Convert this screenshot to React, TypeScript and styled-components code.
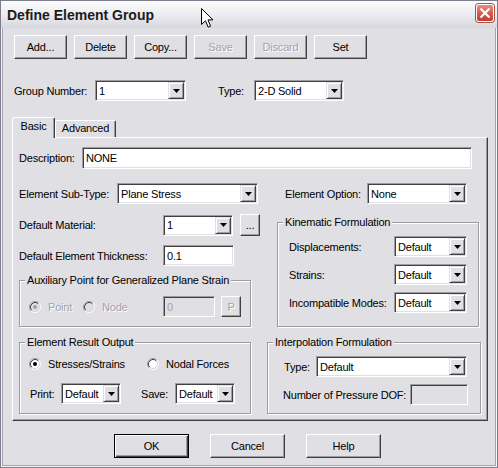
import React from 'react';
import styled, { createGlobalStyle } from 'styled-components';

// classic 3D palette, tuned to the screenshot
const FACE = '#e0dfe3';
const HILITE = '#ffffff';
const SHADE = '#9d9da1';
const DARK = '#404040';
const GREY_TEXT = '#a3a3a7';

const GlobalStyle = createGlobalStyle`
  html, body { margin: 0; padding: 0; background: ${FACE}; }
  body {
    font-family: 'Liberation Sans', Arial, sans-serif;
    font-size: 11px;
    letter-spacing: -0.2px;
    color: #000;
  }
  * { box-sizing: border-box; }
`;

const Window = styled.div`
  position: relative;
  width: 498px;
  height: 468px;
  background: ${FACE};
  border: 1px solid #7c7c8c;
  box-shadow: inset 0 0 0 1px #f6f6f8, inset 0 0 0 2px #a4a4b0;
  display: flex;
  flex-direction: column;
  overflow: hidden;
`;

const TitleBar = styled.div`
  height: 27px;
  flex: none;
  display: flex;
  align-items: center;
  justify-content: space-between;
  padding: 0 3px 0 6px;
  background: linear-gradient(to bottom, #fcfcfd 0%, #eeeef2 45%, #d7d7df 100%);
`;

const Title = styled.span`
  font-size: 14px;
  font-weight: bold;
  letter-spacing: 0;
  color: #1c1c1c;
`;

const CloseBox = styled.span`
  width: 18px;
  height: 18px;
  margin-top: -3px;
  border-radius: 3px;
  border: 1px solid #fff;
  box-shadow: 0 0 0 1px #b05048;
  background: linear-gradient(to bottom, #ea8c80 0%, #d55a4c 55%, #c03f33 100%);
  display: flex;
  align-items: center;
  justify-content: center;
`;

const Cursor = styled.svg`
  position: absolute;
  left: 200px;
  top: 7px;
`;

const Body = styled.div`
  flex: 1;
  display: flex;
  flex-direction: column;
  align-items: flex-start;
  padding: 7px 0 0 11px;
`;

const Toolbar = styled.div`
  display: flex;
  gap: 7px;
  margin-left: 2px;
`;

const Btn = styled.button<{ $w: number; $h?: number; $default?: boolean }>`
  width: ${p => p.$w}px;
  height: ${p => p.$h ?? 24}px;
  flex: none;
  padding: 0;
  font: inherit;
  letter-spacing: inherit;
  color: #000;
  background: ${FACE};
  border: 1px solid;
  border-color: ${p => (p.$default ? '#000' : `${HILITE} ${DARK} ${DARK} ${HILITE}`)};
  box-shadow: ${p =>
    p.$default
      ? `inset 1px 1px 0 ${HILITE}, inset -1px -1px 0 ${DARK}, inset -2px -2px 0 ${SHADE}`
      : `inset -1px -1px 0 ${SHADE}`};
  &:disabled {
    color: ${GREY_TEXT};
    text-shadow: 1px 1px 0 ${HILITE};
  }
`;

const Row = styled.div<{ $mt?: number; $ml?: number }>`
  display: flex;
  align-items: center;
  margin-top: ${p => p.$mt ?? 0}px;
  margin-left: ${p => p.$ml ?? 0}px;
`;

const Label = styled.span<{ $w?: number; $ml?: number; $disabled?: boolean }>`
  flex: none;
  width: ${p => (p.$w ? `${p.$w}px` : 'auto')};
  margin-left: ${p => p.$ml ?? 0}px;
  white-space: nowrap;
  color: ${p => (p.$disabled ? GREY_TEXT : '#000')};
  text-shadow: ${p => (p.$disabled ? `1px 1px 0 ${HILITE}` : 'none')};
`;

const Sunken = styled.div<{ $w: number; $h?: number; $disabled?: boolean }>`
  width: ${p => p.$w}px;
  height: ${p => p.$h ?? 21}px;
  flex: none;
  display: flex;
  align-items: stretch;
  padding: 1px;
  background: ${p => (p.$disabled ? FACE : '#fff')};
  border: 1px solid;
  border-color: ${SHADE} ${HILITE} ${HILITE} ${SHADE};
  box-shadow: inset 1px 1px 0 ${DARK}, inset -1px -1px 0 ${FACE};
`;

const FieldText = styled.span<{ $disabled?: boolean }>`
  flex: 1;
  padding-left: 2px;
  display: flex;
  align-items: center;
  white-space: nowrap;
  overflow: hidden;
  color: ${p => (p.$disabled ? GREY_TEXT : '#000')};
`;

const DropBtn = styled.span`
  width: 16px;
  flex: none;
  background: ${FACE};
  border: 1px solid;
  border-color: ${FACE} ${DARK} ${DARK} ${FACE};
  box-shadow: inset 1px 1px 0 ${HILITE}, inset -1px -1px 0 ${SHADE};
  display: flex;
  align-items: center;
  justify-content: center;
`;

const TabStrip = styled.div`
  display: flex;
  align-items: flex-end;
  height: 20px;
  margin-top: 16px;
`;

const Tab = styled.div<{ $w: number; $active?: boolean }>`
  width: ${p => p.$w}px;
  height: ${p => (p.$active ? 21 : 17)}px;
  margin-bottom: ${p => (p.$active ? -1 : 0)}px;
  position: relative;
  z-index: ${p => (p.$active ? 1 : 0)};
  background: ${FACE};
  border: 1px solid;
  border-bottom: none;
  border-color: ${HILITE} ${DARK} transparent ${HILITE};
  box-shadow: inset -1px 0 0 ${SHADE};
  border-radius: 2px 2px 0 0;
  text-align: center;
  line-height: ${p => (p.$active ? 16 : 15)}px;
`;

const Panel = styled.div`
  width: 476px;
  height: 284px;
  border: 1px solid;
  border-color: ${HILITE} ${DARK} ${DARK} ${HILITE};
  box-shadow: inset -1px -1px 0 ${SHADE};
  padding: 9px 6px 0 6px;
`;

const Columns = styled.div`
  display: grid;
  grid-template-columns: 232px 214px;
  column-gap: 16px;
  row-gap: 8px;
  margin-top: 10px;
`;

const Stack = styled.div`
  display: flex;
  flex-direction: column;
`;

const Group = styled.fieldset<{ $mt?: number; $ml?: number; $w?: number }>`
  margin: ${p => p.$mt ?? 0}px 0 0 ${p => p.$ml ?? 0}px;
  width: ${p => (p.$w ? `${p.$w}px` : 'auto')};
  padding: 0;
  min-width: 0;
  border: 1px solid ${SHADE};
  box-shadow: inset 1px 1px 0 ${HILITE}, 1px 1px 0 ${HILITE};
`;

const Legend = styled.legend`
  margin-left: 5px;
  padding: 0 2px;
  line-height: 14px;
  background: ${FACE};
`;

const GroupBody = styled.div<{ $pad: string }>`
  padding: ${p => p.$pad};
  display: flex;
  flex-direction: column;
`;

const RadioItem = styled.span<{ $w?: number }>`
  display: flex;
  align-items: center;
  gap: 7px;
  flex: none;
  width: ${p => (p.$w ? `${p.$w}px` : 'auto')};
  height: 14px;
`;

const Footer = styled.div`
  display: flex;
  gap: 21px;
  margin: 13px 0 0 102px;
`;

const Arrow = () => (
  <svg width="7" height="4" viewBox="0 0 7 4">
    <polygon points="0,0 7,0 3.5,4" fill="#000" />
  </svg>
);

const Combo: React.FC<{ w: number; value: string }> = ({ w, value }) => (
  <Sunken $w={w}>
    <FieldText>{value}</FieldText>
    <DropBtn>
      <Arrow />
    </DropBtn>
  </Sunken>
);

const Radio: React.FC<{ checked?: boolean; disabled?: boolean }> = ({ checked, disabled }) => (
  <svg width="12" height="12" viewBox="0 0 12 12">
    <circle cx="6" cy="6" r="5" fill={disabled ? FACE : '#fff'} />
    <path d="M2.11 9.89 A5.5 5.5 0 0 1 9.89 2.11" stroke={SHADE} fill="none" />
    <path d="M9.89 2.11 A5.5 5.5 0 0 1 2.11 9.89" stroke={HILITE} fill="none" />
    <path d="M2.82 9.18 A4.5 4.5 0 0 1 9.18 2.82" stroke={DARK} fill="none" />
    <path d="M9.18 2.82 A4.5 4.5 0 0 1 2.82 9.18" stroke="#d4d4d8" fill="none" />
    {checked && <circle cx="6" cy="6" r="2" fill={disabled ? GREY_TEXT : '#000'} />}
  </svg>
);

const App: React.FC = () => {
  return (
    <>
      <GlobalStyle />
      <Window>
        <TitleBar>
          <Title>Define Element Group</Title>
          <CloseBox>
            <svg width="12" height="12" viewBox="0 0 12 12">
              <path d="M1.5 1.5 L10.5 10.5 M10.5 1.5 L1.5 10.5" stroke="#fff" strokeWidth="2.2" />
            </svg>
          </CloseBox>
        </TitleBar>

        <Body>
          {/* record buttons */}
          <Toolbar>
            <Btn $w={53}>Add...</Btn>
            <Btn $w={53}>Delete</Btn>
            <Btn $w={53}>Copy...</Btn>
            <Btn $w={53} disabled>Save</Btn>
            <Btn $w={53} disabled>Discard</Btn>
            <Btn $w={53}>Set</Btn>
          </Toolbar>

          <Row $mt={21} $ml={2}>
            <Label $w={81}>Group Number:</Label>
            <Combo w={91} value="1" />
            <Label $w={36} $ml={32}>Type:</Label>
            <Combo w={90} value="2-D Solid" />
          </Row>

          <TabStrip>
            <Tab $w={43} $active>Basic</Tab>
            <Tab $w={61}>Advanced</Tab>
          </TabStrip>

          <Panel>
            <Row>
              <Label $w={63}>Description:</Label>
              <Sunken $w={390} $h={22}>
                <FieldText>NONE</FieldText>
              </Sunken>
            </Row>

            <Row $mt={14}>
              <Label $w={98}>Element Sub-Type:</Label>
              <Combo w={141} value="Plane Stress" />
              <Label $w={82} $ml={27}>Element Option:</Label>
              <Combo w={100} value="None" />
            </Row>

            <Columns>
              <Stack>
                <Row>
                  <Label $w={144}>Default Material:</Label>
                  <Combo w={70} value="1" />
                  <Btn $w={20} $h={22} style={{ marginLeft: 7 }}>...</Btn>
                </Row>
                <Row $mt={9}>
                  <Label $w={144}>Default Element Thickness:</Label>
                  <Sunken $w={71}>
                    <FieldText>0.1</FieldText>
                  </Sunken>
                </Row>
                <Group $mt={7}>
                  <Legend>Auxiliary Point for Generalized Plane Strain</Legend>
                  <GroupBody $pad="9px 0 9px 9px">
                    <Row>
                      <RadioItem $w={54}>
                        <Radio checked disabled />
                        <Label $disabled>Point</Label>
                      </RadioItem>
                      <RadioItem $w={80}>
                        <Radio disabled />
                        <Label $disabled>Node</Label>
                      </RadioItem>
                      <Sunken $w={52} $disabled>
                        <FieldText $disabled>0</FieldText>
                      </Sunken>
                      <Btn $w={20} $h={21} disabled style={{ marginLeft: 6 }}>P</Btn>
                    </Row>
                  </GroupBody>
                </Group>
              </Stack>

              <Group $mt={1} $ml={10} $w={202}>
                <Legend>Kinematic Formulation</Legend>
                <GroupBody $pad="7px 0 7px 11px">
                  <Row>
                    <Label $w={105}>Displacements:</Label>
                    <Combo w={73} value="Default" />
                  </Row>
                  <Row $mt={7}>
                    <Label $w={105}>Strains:</Label>
                    <Combo w={73} value="Default" />
                  </Row>
                  <Row $mt={7}>
                    <Label $w={105}>Incompatible Modes:</Label>
                    <Combo w={73} value="Default" />
                  </Row>
                </GroupBody>
              </Group>

              <Group>
                <Legend>Element Result Output</Legend>
                <GroupBody $pad="8px 0 9px 9px">
                  <Row>
                    <RadioItem $w={118}>
                      <Radio checked />
                      <Label>Stresses/Strains</Label>
                    </RadioItem>
                    <RadioItem>
                      <Radio />
                      <Label>Nodal Forces</Label>
                    </RadioItem>
                  </Row>
                  <Row $mt={12}>
                    <Label $w={31} $ml={1}>Print:</Label>
                    <Combo w={60} value="Default" />
                    <Label $w={34} $ml={20}>Save:</Label>
                    <Combo w={60} value="Default" />
                  </Row>
                </GroupBody>
              </Group>

              <Group>
                <Legend>Interpolation Formulation</Legend>
                <GroupBody $pad="7px 0 8px 16px">
                  <Row>
                    <Label $w={32}>Type:</Label>
                    <Combo w={151} value="Default" />
                  </Row>
                  <Row $mt={7}>
                    <Label $w={127} $ml={-1}>Number of Pressure DOF:</Label>
                    <Sunken $w={58} $disabled />
                  </Row>
                </GroupBody>
              </Group>
            </Columns>
          </Panel>

          <Footer>
            <Btn $w={75} $default>OK</Btn>
            <Btn $w={75}>Cancel</Btn>
            <Btn $w={75}>Help</Btn>
          </Footer>
        </Body>

        {/* mouse pointer resting on the title bar */}
        <Cursor width="13" height="21" viewBox="0 0 13 21">
          <path
            d="M0.5 0.5 L0.5 16.5 L4.5 12.8 L7.2 19.2 L9.6 18.2 L7 11.9 L12 11.9 Z"
            fill="#fff"
            stroke="#000"
            strokeWidth="1"
            strokeLinejoin="miter"
          />
        </Cursor>
      </Window>
    </>
  );
};

export default App;
